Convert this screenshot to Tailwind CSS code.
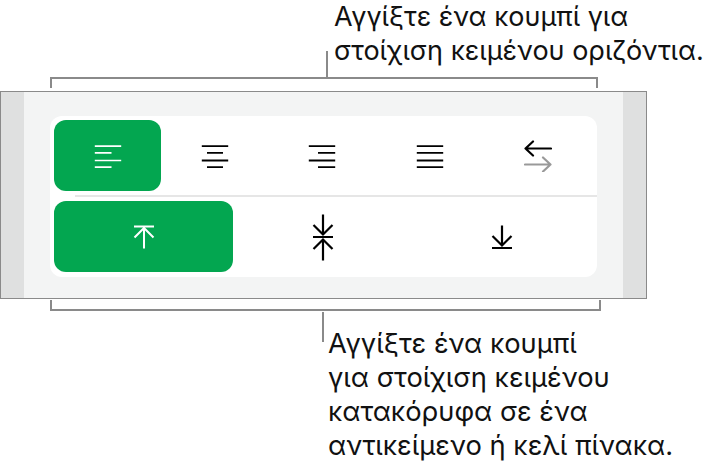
<!DOCTYPE html>
<html lang="el">
<head>
  <meta charset="UTF-8">
  <title>Στοίχιση κειμένου</title>
  <script src="https://cdn.jsdelivr.net/npm/@tailwindcss/browser@4"></script>
</head>
<body class="bg-white w-[708px] h-[471px] overflow-hidden font-['Inter',sans-serif] text-[#111] text-[27px] leading-[34px]">
  <!-- Top callout -->
  <div class="h-[91px] relative">
    <p class="absolute left-[334px] top-0 whitespace-nowrap">Αγγίξτε ένα κουμπί για<br>στοίχιση κειμένου οριζόντια.</p>
    <div class="absolute left-[326px] top-[51px] w-[2px] h-[28px] bg-[#8a8a8a]"></div>
    <div class="absolute left-[50px] top-[77px] w-[548px] h-[11px] border-t-2 border-x-2 border-[#8a8a8a]"></div>
  </div>

  <!-- Panel -->
  <div class="w-[647px] h-[208px] border border-[#8a8a8a] bg-[#f3f4f4] flex">
    <div class="w-[23px] bg-[#dfe0e0]"></div>
    <div class="flex-1 pl-[26px] pt-[24px]">
      <div class="w-[547px] h-[161px] bg-white rounded-[12px] p-1">
        <div class="grid grid-cols-[repeat(5,107.3px)] h-[71px]">
          <button class="flex items-center justify-center bg-[#03a650] rounded-[12px] w-[107px]">
            <svg width="28" height="24" viewBox="0 0 28 24" fill="none" stroke="#fff" stroke-width="1.7"><path d="M0.8 2.2H27.2M0.8 8.8H17.5M0.8 16.5H27.2M0.8 23.2H17.5"/></svg>
          </button>
          <button class="flex items-center justify-center">
            <svg width="28" height="24" viewBox="0 0 28 24" fill="none" stroke="#000" stroke-width="1.8"><path d="M0.8 2.2H27.2M6 8.8H22M0.8 16.5H27.2M6 23.2H22"/></svg>
          </button>
          <button class="flex items-center justify-center">
            <svg width="28" height="24" viewBox="0 0 28 24" fill="none" stroke="#000" stroke-width="1.8"><path d="M0.8 2.2H27.2M10 8.8H27.2M0.8 16.5H27.2M10 23.2H27.2"/></svg>
          </button>
          <button class="flex items-center justify-center">
            <svg width="28" height="24" viewBox="0 0 28 24" fill="none" stroke="#000" stroke-width="1.8"><path d="M0.8 2.2H27.2M0.8 8.8H27.2M0.8 16.5H27.2M0.8 23.2H27.2"/></svg>
          </button>
          <button class="flex items-center justify-center">
            <svg class="ml-[2px]" width="28" height="32" viewBox="0 0 28 32" fill="none" stroke-width="2.2" stroke-linecap="round" stroke-linejoin="round">
              <path stroke="#000" d="M27 8.5H1.5M9 1.5L1.5 8.5L9 15.5"/>
              <path stroke="#999" d="M1 24.5H26.5M19 17.5L26.5 24.5L19 31.5"/>
            </svg>
          </button>
        </div>
        <div class="h-[2px] my-1 ml-[21px] -mr-1 bg-[#e6e6e6]"></div>
        <div class="grid grid-cols-[repeat(3,179px)] h-[71px]">
          <button class="flex items-center justify-center bg-[#03a650] rounded-[12px] w-[179px]">
            <svg width="22" height="24" viewBox="0 0 22 24" fill="none" stroke="#fff" stroke-width="2"><path d="M1 1.5H21M11 2V23.5M1.5 12.5L11 3L20.5 12.5"/></svg>
          </button>
          <button class="flex items-center justify-center">
            <svg width="22" height="48" viewBox="0 0 22 48" fill="none" stroke="#000" stroke-width="2.2"><path d="M1 24H21M11 1.5V22M1.5 12L11 21.5L20.5 12M11 47.5V26M1.5 36L11 26.5L20.5 36"/></svg>
          </button>
          <button class="flex items-center justify-center">
            <svg width="22" height="24" viewBox="0 0 22 24" fill="none" stroke="#000" stroke-width="2.2"><path d="M1 23H21M11 0.5V20.5M1.5 11L11 20.5L20.5 11"/></svg>
          </button>
        </div>
      </div>
    </div>
    <div class="w-[23px] bg-[#dfe0e0]"></div>
  </div>

  <!-- Bottom callout -->
  <div class="relative">
    <div class="absolute left-[50px] top-[1px] w-[551px] h-[11px] border-b-2 border-x-2 border-[#8a8a8a]"></div>
    <div class="absolute left-[322px] top-[13px] w-[2px] h-[30px] bg-[#8a8a8a]"></div>
    <p class="absolute left-[328px] top-[28px] text-[27.3px] whitespace-nowrap">Αγγίξτε ένα κουμπί<br>για στοίχιση κειμένου<br>κατακόρυφα σε ένα<br>αντικείμενο ή κελί πίνακα.</p>
  </div>
</body>
</html>
